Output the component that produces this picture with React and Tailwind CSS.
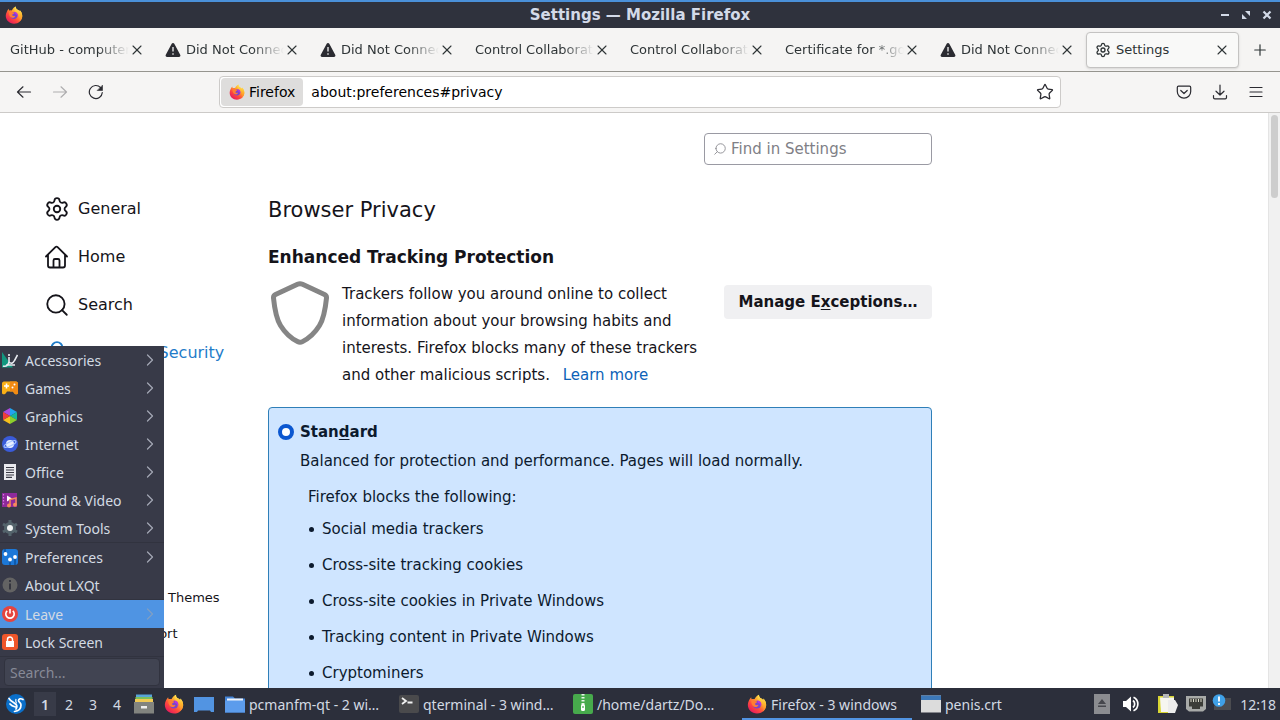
// src/App.jsx
import React from 'react';
import { Settings, Search, Lock, Star, ChevronRight, X, Plus, Menu } from 'lucide-react';

const tabs = [
    { title: 'GitHub - computercraft' },
    { title: 'Did Not Connect: Potential', warning: true },
    { title: 'Did Not Connect: Potential', warning: true },
    { title: 'Control Collaboration' },
    { title: 'Control Collaboration' },
    { title: 'Certificate for *.google' },
    { title: 'Did Not Connect: Potential', warning: true },
    { title: 'Settings', active: true },
];

const blockedItems = [
    'Social media trackers',
    'Cross-site tracking cookies',
    'Cross-site cookies in Private Windows',
    'Tracking content in Private Windows',
    'Cryptominers',
];

const FirefoxLogo = ({ className }) => (
    <svg viewBox="0 0 24 24" className={className} aria-hidden="true">
        <defs>
            <linearGradient id="fxBody" x1="0.85" y1="0.1" x2="0.2" y2="0.95">
                <stop offset="0" stopColor="#fff04a" />
                <stop offset="0.35" stopColor="#ffa22c" />
                <stop offset="0.65" stopColor="#ff4a3d" />
                <stop offset="1" stopColor="#e5195e" />
            </linearGradient>
            <linearGradient id="fxTail" x1="0.7" y1="0" x2="0.5" y2="1">
                <stop offset="0" stopColor="#fff36b" />
                <stop offset="0.5" stopColor="#ffb82e" />
                <stop offset="1" stopColor="#ff7a2b" />
            </linearGradient>
        </defs>
        <path d="M2.2 8.2C2.8 6.6 3.8 5 5 3.8c0 1.1.3 2 .8 2.6 1-.5 2.400-.6 3.300-.3C10.500 3 12.500 1.500 14.500.8c-.2 1.500.1 2.700 1.500 4 1.300.6 2.700 1.200 3.500 2.600.2-.6.2-1.200 0-2 2 1.800 3.500 4.700 3.500 7.800C23 19 18.200 23.500 12 23.500S1 18.800 1 13c0-1.700.5-3.400 1.200-4.800z" fill="url(#fxBody)" />
        <path d="M14.500.8c-.2 1.500.1 2.700 1.500 4 1.300.6 2.700 1.200 3.500 2.600.2-.6.2-1.200 0-2 2 1.800 3.500 4.700 3.500 7.800 0 3-1.500 5.800-3.800 7.600 1-3 .8-6.500-1.200-8.800-1.800-2-5.500-3.500-5.300-7C12.800 3.200 13.500 1.500 14.500.8z" fill="url(#fxTail)" />
        <circle cx="12" cy="12.800" r="4.600" fill="#7a45cc" />
        <path d="M12.500 7.500c2.500.2 4.800 2.200 4.800 5 0 .8-.3 1.800-.8 2.500.2-2.400-1.500-4-3.500-4.200z" fill="#b833e1" />
        <path d="M5.800 6.400c1-.5 2.400-.6 3.300-.3-.5.900-.5 1.800.6 2.300l2.300.6c.3.900-.6 1.600-1.800 2.100-.7.300-.8 1-.3 1.600.9 1 2.500.8 3.800.2-.4 2-2.300 3.200-4.400 2.600C6.700 14.700 5.200 12 5.200 9.500c0-1.100.200-2.200.600-3.100z" fill="#ff7d33" />
    </svg>
);

const WarningIcon = () => (
    <svg viewBox="0 0 16 16" className="size-4 shrink-0" aria-hidden="true">
        <path d="M6.700 1.800a1.500 1.500 0 0 1 2.600 0l5.900 10.900A1.500 1.500 0 0 1 13.900 15H2.100a1.500 1.500 0 0 1-1.300-2.300z" fill="#2b2b31" />
        <path d="M8 5v4.500M8 11.300v1.400" stroke="#f5f5f5" strokeWidth="1.300" />
    </svg>
);

const Tab = ({ title, warning, active }) => (
    <div role="tab" aria-selected={!!active} className="min-w-0 flex-1 px-px">
        <div className={`flex h-9 items-center rounded px-2 border ${active ? 'border-[#c4c3c2] bg-[#f9f9f8] shadow-sm' : 'border-transparent'}`}>
            {warning && <WarningIcon />}
            {active && <Settings className="size-4 shrink-0" strokeWidth={2} />}
            <span className={`min-w-0 flex-1 overflow-hidden whitespace-nowrap text-[13px] ${warning || active ? 'ml-[5px]' : ''} ${active ? '' : '[mask-image:linear-gradient(to_right,black_calc(100%-32px),transparent)]'}`}>
                {title}
            </span>
            <button type="button" aria-label={`Close ${title}`} className="flex size-4 shrink-0 items-center justify-center">
                <X className="size-4 shrink-0" strokeWidth={1.600} />
            </button>
        </div>
    </div>
);

const TitleBar = () => (
    <header className="grid h-7 shrink-0 grid-cols-[80px_1fr_80px] items-center border-t-2 border-[#4a90d9] bg-[#2f323d] text-[#d3dae8]">
        <FirefoxLogo className="ml-[5px] size-[18px]" />
        <h1 className="text-center text-[15px] leading-5 font-bold">Settings — Mozilla Firefox</h1>
        <div className="flex justify-end gap-[5px] pr-[5px]">
            <button type="button" aria-label="Minimize" className="size-4">
                <svg viewBox="0 0 16 16"><path d="M4 8h8" stroke="currentColor" strokeWidth="2" /></svg>
            </button>
            <button type="button" aria-label="Maximize" className="size-4">
                <svg viewBox="0 0 16 16" fill="currentColor"><path d="M7 4h5v5zM4 7v5h5z" /></svg>
            </button>
            <button type="button" aria-label="Close" className="size-4">
                <svg viewBox="0 0 16 16"><path d="M4.500 4.500l7 7M11.500 4.500l-7 7" stroke="currentColor" strokeWidth="2.200" /></svg>
            </button>
        </div>
    </header>
);

const ToolButton = ({ label, disabled, children }) => (
    <button type="button" aria-label={label} disabled={disabled} className="flex size-8 items-center justify-center disabled:opacity-35">
        <svg viewBox="0 0 16 16" className="size-4" fill="none" stroke="currentColor" strokeWidth="1.200" strokeLinecap="round" strokeLinejoin="round">
            {children}
        </svg>
    </button>
);

const Toolbar = () => (
    <div className="grid h-[41px] shrink-0 grid-cols-[219fr_842fr_219fr] items-center border-b border-[#cccac8] bg-[#f6f5f4] text-[#2b2b31]">
        <div className="flex gap-1 pl-2">
            <ToolButton label="Back"><path d="M14.500 8H1.500M7 2.800L1.500 8 7 13.200" /></ToolButton>
            <ToolButton label="Forward" disabled><path d="M1.500 8h13M9 2.800L14.500 8 9 13.200" /></ToolButton>
            <ToolButton label="Reload">
                <path d="M14.300 8.500A6.500 6.500 0 1 1 12.600 3.600" />
                <path d="M14.500 1.500v5h-5z" fill="currentColor" strokeWidth="0.600" />
            </ToolButton>
        </div>
        <div className="flex h-8 items-center rounded border border-[#cdcbc9] bg-white p-px">
            <span className="flex h-7 items-center gap-1 rounded-sm bg-[#dedddc] px-2 text-[14px] text-black">
                <FirefoxLogo className="size-4" />
                Firefox
            </span>
            <input aria-label="Address" defaultValue="about:preferences#privacy" className="min-w-0 flex-1 px-2 text-[14px] text-black outline-none" />
            <button type="button" aria-label="Bookmark this page" className="flex size-7 items-center justify-center">
                <Star className="size-[18px]" strokeWidth={1.700} />
            </button>
        </div>
        <div className="flex justify-end gap-1 pr-2">
            <ToolButton label="Save to Pocket">
                <path d="M2.500 2.200h11c.7 0 1.200.5 1.200 1.200V7.500a6.700 6.700 0 0 1-13.400 0V3.400c0-.7.500-1.200 1.200-1.200z" />
                <path d="M4.800 6.500L8 9.500l3.200-3" />
            </ToolButton>
            <ToolButton label="Downloads"><path d="M8 1v10M4 7.200L8 11l4-3.800M1.500 11.500v2c0 .8.500 1.300 1.300 1.300h10.400c.8 0 1.300-.5 1.300-1.300v-2" /></ToolButton>
            <ToolButton label="Open menu"><path d="M2 3.500h12M2 8h12M2 12.500h12" /></ToolButton>
        </div>
    </div>
);

const HomeIcon = () => (
    <svg viewBox="0 0 24 24" className="size-6" fill="none" stroke="currentColor" strokeWidth="1.800" strokeLinecap="round" strokeLinejoin="round" aria-hidden="true">
        <path d="M1 11.500L10.400 2.100a1.600 1.600 0 0 1 2.200 0l9.400 9.400M3 10v10.500c0 1.200.8 2 2 2h13c1.200 0 2-.8 2-2V10" />
        <path d="M8.500 22v-6.500c0-.9.600-1.500 1.500-1.500h3c.9 0 1.500.6 1.500 1.500V22" />
    </svg>
);

const NavItem = ({ icon, label, current }) => (
    <a href={`#${label}`} className={`flex h-12 items-center gap-[9px] text-[16px] ${current ? 'text-[#1f7cc9]' : ''}`}>
        <span className="flex size-6 items-center justify-center">{icon}</span>
        {label}
    </a>
);

const SettingsNav = () => (
    <nav className="w-[268px] shrink-0 pt-[72px] pl-[45px] whitespace-nowrap">
        <NavItem icon={<Settings className="size-[26px] shrink-0" strokeWidth={1.700} />} label="General" />
        <NavItem icon={<HomeIcon />} label="Home" />
        <NavItem icon={<Search className="size-[26px] shrink-0" strokeWidth={1.700} />} label="Search" />
        <NavItem icon={<Lock className="size-[26px] shrink-0" strokeWidth={1.700} />} label="Privacy & Security" current />
        <div className="mt-[203px] pl-[34px] text-[13px]">
            <a href="#addons" className="flex h-9 items-center">Extensions &amp; Themes</a>
            <a href="#support" className="flex h-9 items-center">Firefox Support</a>
        </div>
    </nav>
);

const PrivacyPane = () => (
    <main className="w-full max-w-[664px] pt-5 text-[15px]">
        <label className="ml-auto flex h-8 w-[228px] items-center gap-1 rounded border border-[#9a9aa3] px-2 text-[#88888e]">
            <Search className="size-3.5 -scale-x-100" strokeWidth={1.500} />
            <input type="search" aria-label="Find in Settings" placeholder="Find in Settings" className="min-w-0 flex-1 outline-none placeholder:text-[#808086]" />
        </label>
        <h2 className="mt-[30px] text-[21px] leading-[30px]">Browser Privacy</h2>
        <h3 className="mt-5 text-[17px] leading-6 font-bold">Enhanced Tracking Protection</h3>
        <div className="mt-3 flex items-start">
            <svg viewBox="0 0 64 64" className="size-16 shrink-0" fill="none" stroke="#858585" strokeWidth="5" strokeLinejoin="round" aria-hidden="true">
                <path d="M29.500 3.300a6 6 0 0 1 5 0L56.500 13.500Q58.700 14.600 58.500 17C57.300 29 55.500 38 51.500 44.500 47 51.800 40.500 57.500 34.500 60.600a5.500 5.500 0 0 1-5 0C23.500 57.500 17 51.800 12.500 44.500 8.500 38 6.700 29 5.500 17Q5.300 14.600 7.500 13.500z" />
            </svg>
            <p className="ml-2.5 flex-1 leading-[27px]">
                Trackers follow you around online to collect information about your browsing habits and
                interests. Firefox blocks many of these trackers and other malicious scripts.
                <a href="#learn-more" className="ml-2 text-[#0c62b8]"> Learn more</a>
            </p>
            <button type="button" className="mt-1 ml-6 h-[34px] w-[208px] shrink-0 rounded bg-[#f0f0f2] font-bold">
                Manage E<u className="underline-offset-2">x</u>ceptions…
            </button>
        </div>
        <section className="mt-[18px] rounded border border-[#2f7fb8] bg-[#cfe5ff] pt-3 pr-3 pb-6 pl-[9px] text-[#0c1a2e]">
            <label className="flex h-6 items-center gap-1.5 font-bold">
                <input type="radio" name="tracking" defaultChecked className="size-4 appearance-none rounded-full border-4 border-[#0b57d0] bg-white" />
                <span>Stan<u className="underline-offset-2">d</u>ard</span>
            </label>
            <div className="pl-[22px]">
                <p className="mt-1 leading-[27px]">Balanced for protection and performance. Pages will load normally.</p>
                <div className="pl-2">
                    <p className="mt-2.5 leading-6">Firefox blocks the following:</p>
                    <ul className="mt-0.5 leading-9">
                        {blockedItems.map((item) => (
                            <li key={item} className="flex items-center gap-2 pl-px">
                                <span className="size-[5px] rounded-full bg-current" />
                                {item}
                            </li>
                        ))}
                    </ul>
                </div>
            </div>
        </section>
    </main>
);

const AccessoriesIcon = () => (
    <svg viewBox="0 0 16 16"><path d="M0 0l11 15.500H0z" fill="#12977f" /><path d="M1 14c3 1 5-1 6-4 2 2 4 1.500 5.500-1.500L15.500 3M7 5v5M4 13l9 0" stroke="#e8eaf0" strokeWidth="1.600" fill="none" /><circle cx="7" cy="3" r="1" fill="#fff" /></svg>
);
const GamesIcon = () => (
    <svg viewBox="0 0 16 16"><path d="M2 1.500h12c1.200 0 2 1 2 2v9.500c0 1.500-3 2-4 0L11 11.500H5L4 13c-1 2-4 1.500-4 0V3.500c0-1 .8-2 2-2z" fill="#f9b016" /><path d="M8 1.500h6c1.200 0 2 1 2 2v9.500c0 1.500-3 2-4 0l-1-1.500H8z" fill="#f28a14" /><path d="M4.500 3.500v5M2 6h5" stroke="#fff" strokeWidth="1.600" /><circle cx="12.500" cy="4.500" r="1" fill="#fff" /><circle cx="10.500" cy="7.500" r="1" fill="#fff" /></svg>
);
const GraphicsIcon = () => (
    <svg viewBox="0 0 16 16"><path d="M8 8V0l7 4z" fill="#20a4ef" /><path d="M8 8V0L1 4z" fill="#a94be0" /><path d="M8 8l7-4v8z" fill="#17b79a" /><path d="M8 8l7 4-7 4z" fill="#8ccf2c" /><path d="M8 8v8l-7-4z" fill="#f6c01c" /><path d="M8 8l-7 4V4z" fill="#f03d3a" /></svg>
);
const InternetIcon = () => (
    <svg viewBox="0 0 16 16"><circle cx="8" cy="8" r="8" fill="#3a5bd9" /><circle cx="8" cy="8" r="4" fill="#e8efff" /><ellipse cx="8" cy="8" rx="6.500" ry="2" fill="none" stroke="#a8c6ff" strokeWidth="1.200" transform="rotate(-25 8 8)" /></svg>
);
const OfficeIcon = () => (
    <svg viewBox="0 0 16 16"><path d="M2 0h12v16H2z" fill="#e9e9ee" /><path d="M4 3.500h8M4 6h8M4 8.500h8M4 11h8M4 13.300h6" stroke="#3a3a45" strokeWidth="1.200" /></svg>
);
const MediaIcon = () => (
    <svg viewBox="0 0 16 16"><path d="M0 1h15v14H0z" fill="#8d2a9b" /><path d="M1.500 2v12" stroke="#d07be0" strokeWidth="1.200" strokeDasharray="1.500 1.500" /><path d="M5 3.500l5 3-5 3z" fill="#fff" /><path d="M8 13.500V7.500l6-1.500v6.500" stroke="#f58a5a" strokeWidth="1.500" fill="none" /><circle cx="7" cy="13.500" r="2" fill="#f58a5a" /><circle cx="13" cy="12.800" r="2" fill="#f58a5a" /></svg>
);
const SystemIcon = () => (
    <svg viewBox="0 0 16 16"><circle cx="8" cy="8" r="6" fill="#54646c" /><path d="M8 0v16M1 4l14 8M1 12l14-8" stroke="#54646c" strokeWidth="3" /><circle cx="8" cy="8" r="3" fill="#f2f5f5" /></svg>
);
const PreferencesIcon = () => (
    <svg viewBox="0 0 16 16"><rect width="16" height="16" rx="3" fill="#1c78d8" /><path d="M3 0v5M8 16v-6M13 16V8" stroke="#105aaa" strokeWidth="2" /><circle cx="3.500" cy="5" r="1.900" fill="#fff" /><circle cx="8" cy="10.500" r="1.900" fill="#fff" /><circle cx="13" cy="8" r="1.900" fill="#fff" /></svg>
);
const AboutIcon = () => (
    <svg viewBox="0 0 16 16"><circle cx="8" cy="8" r="7.500" fill="#636363" /><path d="M8 3v2M8 6.500V12.500" stroke="#35363f" strokeWidth="2" /></svg>
);
const LeaveIcon = () => (
    <svg viewBox="0 0 16 16"><circle cx="8" cy="8" r="8" fill="#e5443f" /><path d="M5.200 4.800a4.200 4.200 0 1 0 5.600 0M8 3v4.500" stroke="#fff" strokeWidth="1.600" fill="none" /></svg>
);
const LockScreenIcon = () => (
    <svg viewBox="0 0 16 16"><rect width="16" height="16" rx="3" fill="#f0562a" /><path d="M4 7h8v6H4z" fill="#fff" /><path d="M5.500 7.500V5.500a2.500 2.500 0 0 1 5 0v2" stroke="#fff" strokeWidth="1.500" fill="none" /></svg>
);

const menuGroups = [
    [
        { label: 'Accessories', icon: <AccessoriesIcon />, submenu: true },
        { label: 'Games', icon: <GamesIcon />, submenu: true },
        { label: 'Graphics', icon: <GraphicsIcon />, submenu: true },
        { label: 'Internet', icon: <InternetIcon />, submenu: true },
        { label: 'Office', icon: <OfficeIcon />, submenu: true },
        { label: 'Sound & Video', icon: <MediaIcon />, submenu: true },
        { label: 'System Tools', icon: <SystemIcon />, submenu: true },
    ],
    [
        { label: 'Preferences', icon: <PreferencesIcon />, submenu: true },
        { label: 'About LXQt', icon: <AboutIcon /> },
    ],
    [
        { label: 'Leave', icon: <LeaveIcon />, submenu: true, active: true },
        { label: 'Lock Screen', icon: <LockScreenIcon /> },
    ],
];

const StartMenu = () => (
    <div className="absolute bottom-full left-0 w-[164px] bg-[#383a48] pb-0.5 text-[#d3dae3]">
        {menuGroups.map((group, i) => (
            <div key={i} role="menu" className="border-b border-[#31333f]">
                {group.map(({ label, icon, submenu, active }) => (
                    <button
                        key={label}
                        type="button"
                        role="menuitem"
                        className={`flex h-7 w-full items-center pr-1 pl-0.5 text-left ${active ? 'bg-[#4f94e3]' : ''}`}
                    >
                        <span className="size-4 shrink-0">{icon}</span>
                        <span className="ml-[7px] flex-1">{label}</span>
                        {submenu && <ChevronRight className={`size-5 ${active ? 'text-[#7f9fc4]' : 'text-[#a3a7b4]'}`} strokeWidth={1.500} />}
                    </button>
                ))}
            </div>
        ))}
        <input aria-label="Search applications" placeholder="Search..." className="mx-1 mt-px block h-7 w-[156px] rounded-sm border border-[#31333f] bg-[#414452] px-[5px] outline-none placeholder:text-[#878a97]" />
    </div>
);

const FolderIcon = () => (
    <svg viewBox="0 0 20 20"><path d="M0 2.500h8l2 2h10v14H0z" fill="#4384d8" /><path d="M2 4.500h16v3H2z" fill="#eef4fc" /><path d="M0 6.500h20v12H0z" fill="#5c9cec" /></svg>
);
const TerminalIcon = () => (
    <svg viewBox="0 0 20 20"><rect y="1" width="20" height="18" rx="2" fill="#4a4a4c" /><path d="M3 4l4 3-4 3M8.500 8.500h5" stroke="#f2f2f2" strokeWidth="1.800" fill="none" /></svg>
);
const ArchiveIcon = () => (
    <svg viewBox="0 0 20 20"><rect width="20" height="20" rx="2" fill="#47aa4c" /><path d="M10 0v11" stroke="#e9f6e9" strokeWidth="3" strokeDasharray="1.500 1.500" /><rect x="8" y="10" width="4" height="7" rx="1.500" fill="#fff" /><path d="M10 12v2" stroke="#47aa4c" strokeWidth="1.200" /></svg>
);
const WindowIcon = () => (
    <svg viewBox="0 0 20 20"><path d="M0 1.500h20v17H0z" fill="#dcdcdc" /><path d="M0 1.500h20v4.500H0z" fill="#3c78b8" /></svg>
);

// Titles are already shortened by the window list.
const tasks = [
    { title: 'pcmanfm-qt - 2 wi…', icon: <FolderIcon /> },
    { title: 'qterminal - 3 wind…', icon: <TerminalIcon /> },
    { title: '/home/dartz/Do…', icon: <ArchiveIcon /> },
    { title: 'Firefox - 3 windows', icon: <FirefoxLogo className="size-5" />, active: true },
    { title: 'penis.crt', icon: <WindowIcon /> },
];

const Taskbar = () => (
    <footer className="relative flex h-8 shrink-0 items-center bg-[#2c2f3b] pr-1 font-['Noto_Sans',sans-serif] text-[14px] text-[#d3dae3]">
        <StartMenu />
        <button type="button" aria-label="Start menu" className="ml-1.5 size-5">
            <svg viewBox="0 0 20 20">
                <circle cx="10" cy="10" r="10" fill="#0b6fc9" />
                <path d="M3 4.500c1.500 2.500 4 3.500 6.500 5.500 1.500 1.200 1.800 3 .5 5M4 10c1.500 2 3.500 2.500 5.500 3M8.500 17.500c4-.5 6.500-3 6.500-6.500 0-2.500-2.500-2.500-2.500-4.500 0-1.500 2-2.500 4.500-1" stroke="#fff" strokeWidth="1.700" strokeLinecap="round" fill="none" />
                <path d="M10 5c-.5 1.500-.5 3 .5 4.500" stroke="#fff" strokeWidth="1.200" fill="none" />
            </svg>
        </button>
        <div className="ml-2 flex gap-0.5">
            {[1, 2, 3, 4].map((n) => (
                <button key={n} type="button" className={`h-6 w-[22px] ${n === 1 ? 'bg-[#383b48] font-semibold' : ''}`}>{n}</button>
            ))}
        </div>
        <div className="ml-1.5 flex items-center gap-2.5">
            <button type="button" aria-label="File manager" className="size-5">
                <svg viewBox="0 0 20 20"><path d="M2 .5h16v3H2z" fill="#58a6d8" /><path d="M1.500 3h17v2.500h-17z" fill="#7cc05a" /><path d="M1 5h18v3H1z" fill="#f0c955" /><path d="M0 8h20v11.500H0z" fill="#82847f" /><path d="M7 12h6v2.500H7z" fill="#eee" /></svg>
            </button>
            <button type="button" aria-label="Firefox"><FirefoxLogo className="block size-5" /></button>
            <button type="button" aria-label="Show desktop" className="size-5">
                <svg viewBox="0 0 20 20"><path d="M0 3h20v15h-3l-1-1.500H4L3 18H0z" fill="#5294e2" /></svg>
            </button>
        </div>
        <div className="ml-1.5 flex h-full min-w-0 flex-1 gap-1">
            {tasks.map(({ title, icon, active }) => (
                <button
                    key={title}
                    type="button"
                    className={`flex w-[170px] items-center gap-1 border-y-2 border-t-transparent px-[5px] whitespace-nowrap ${active ? 'border-b-[#5294e2]' : 'border-b-transparent'}`}
                >
                    <span className="size-5 shrink-0">{icon}</span>
                    {title}
                </button>
            ))}
        </div>
        <div className="flex shrink-0 items-center">
            <svg viewBox="0 0 16 20" className="h-5 w-4" aria-hidden="true"><path d="M0 0h16v20H0z" fill="#8b8c90" /><path d="M8 5l4 5H4zM4 11.500h8v1.500H4z" fill="#46474d" /></svg>
            <svg viewBox="0 0 18 18" className="ml-3 size-[18px]" aria-hidden="true"><path d="M1 6h3l5-4.500v15L4 12H1z" fill="#fff" /><path d="M11 5.500a4.500 4.500 0 0 1 0 7M11.500 2.200a7.500 7.500 0 0 1 0 13.600" stroke="#fff" strokeWidth="1.700" fill="none" /></svg>
            <svg viewBox="0 0 20 20" className="ml-[18px] size-5" aria-hidden="true"><path d="M0 2h16v17H0z" fill="#d9d633" /><path d="M2 3.500h14V18H3z" fill="#f6f6f0" /><path d="M5 0h6v4H5z" fill="#b5b7b8" /><path d="M10 6h7l3 5-3 8h-7z" fill="#ececec" /></svg>
            <svg viewBox="0 0 20 20" className="ml-2 size-5" aria-hidden="true"><path d="M0 2h20v13l-3 2.500H3L0 15z" fill="#a8aaa8" /><path d="M3 4.500h14v8h-3V15H6v-2.500H3z" fill="#3c3d38" /><path d="M5 5v3M7.500 5v3M10 5v3M12.500 5v3M15 5v3" stroke="#d8d8c8" /></svg>
            <svg viewBox="0 0 20 20" className="ml-1.5 size-5" aria-hidden="true"><path d="M9 4h10v12H2v-4z" fill="#4b4c50" /><circle cx="7" cy="6.500" r="6.300" fill="#3fa0e6" /><path d="M7 2.500v5M7 9v2" stroke="#fff" strokeWidth="1.800" /></svg>
            <time className="ml-2">12:18</time>
        </div>
    </footer>
);

const App = () => {
    return (
        <div className="flex h-screen flex-col overflow-hidden bg-white font-['DejaVu_Sans',sans-serif] text-[#15141a]">
            <TitleBar />
            <div role="tablist" className="flex h-11 shrink-0 items-start border-b border-[#96958f] bg-[#f5f4f3] pt-1 text-[#2e3436]">
                {tabs.map((tab, i) => <Tab key={i} {...tab} />)}
                <button type="button" aria-label="New tab" className="flex h-9 w-10 shrink-0 items-center justify-center">
                    <Plus className="size-[18px]" strokeWidth={1.600} />
                </button>
            </div>
            <Toolbar />
            <div className="flex min-h-0 flex-1">
                <div className="flex min-w-0 flex-1 overflow-hidden">
                    <SettingsNav />
                    <PrivacyPane />
                </div>
                <div className="w-3 shrink-0 border-l border-[#e4e4e4] bg-[#f1f1f1] px-0.5 pt-0.5">
                    <div className="h-[83px] rounded-full bg-[#cdcdcd]" />
                </div>
            </div>
            <Taskbar />
        </div>
    );
};

export default App;
